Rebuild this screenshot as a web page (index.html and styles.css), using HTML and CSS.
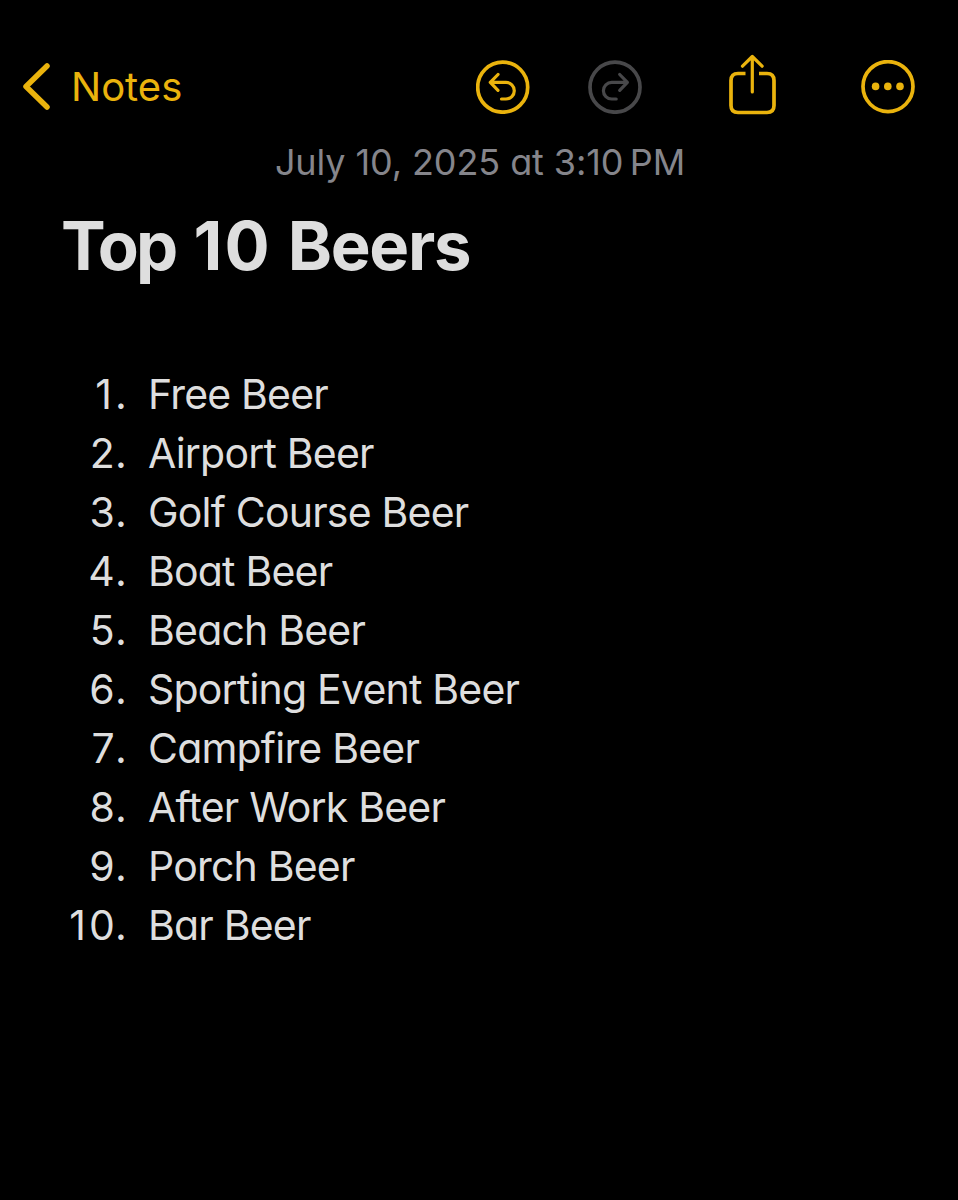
FILE: index.html
```html
<!DOCTYPE html>
<html lang="en">

<head>
    <meta charset="UTF-8">
    <meta name="viewport" content="width=device-width, initial-scale=1.0">
    <title>Top 10 Beers</title>
    <link rel="stylesheet" href="styles.css">
</head>

<body>
    <!-- Top toolbar -->
    <header class="toolbar">
        <a class="back">
            <svg class="chevron" width="28" height="48" viewBox="0 0 28 48">
                <path d="M25 3 L4 23.500 L25 44" />
            </svg>
            <span class="back-label">Notes</span>
        </a>
        <div class="actions">
            <svg class="icon undo" width="54" height="54" viewBox="0 0 54 54">
                <circle cx="26.700" cy="27.200" r="25" />
                <path class="arrow" d="M22 14.500 L14.300 22.400 L22 30.300 M15 22.400 H30 A8.300 8.300 0 0 1 30 39 H25.500" />
            </svg>
            <svg class="icon redo" width="54" height="54" viewBox="0 0 54 54">
                <circle cx="27" cy="27.200" r="25" />
                <path class="arrow" d="M31.700 14.500 L39.400 22.400 L31.700 30.300 M38.700 22.400 H23.700 A8.300 8.300 0 0 0 23.700 39 H28.200" />
            </svg>
            <svg class="icon share" width="48" height="62" viewBox="0 0 48 62">
                <path class="box" d="M17.500 19.500 H10 Q3 19.500 3 26.500 V51.500 Q3 58.500 10 58.500 H39 Q46 58.500 46 51.500 V26.500 Q46 19.500 39 19.500 H31" />
                <path class="arrow" d="M24.300 38 V3 M14.500 12.200 L24.300 2.500 L34.100 12.200" />
            </svg>
            <svg class="icon more" width="54" height="54" viewBox="0 0 54 54">
                <circle cx="27" cy="26.600" r="25" />
                <circle class="dot" cx="14.600" cy="26.400" r="3.800" />
                <circle class="dot" cx="26.800" cy="26.400" r="3.800" />
                <circle class="dot" cx="39" cy="26.400" r="3.800" />
            </svg>
        </div>
    </header>

    <!-- Note -->
    <main class="note">
        <p class="date">July 10, 2025 at 3:10&#8239;PM</p>
        <h1 class="title"><span class="top">Top</span> <span class="ten">10</span> Beers</h1>
        <ol class="list">
            <li><span class="num"><span class="one">1</span>.</span><span class="name">Free Beer</span></li>
            <li><span class="num">2.</span><span class="name">Airport Beer</span></li>
            <li><span class="num">3.</span><span class="name">Golf Course Beer</span></li>
            <li><span class="num">4.</span><span class="name">Boat Beer</span></li>
            <li><span class="num">5.</span><span class="name">Beach Beer</span></li>
            <li><span class="num">6.</span><span class="name">Sporting Event Beer</span></li>
            <li><span class="num">7.</span><span class="name">Campfire Beer</span></li>
            <li><span class="num">8.</span><span class="name">After Work Beer</span></li>
            <li><span class="num">9.</span><span class="name">Porch Beer</span></li>
            <li><span class="num"><span class="one">1</span>0.</span><span class="name">Bar Beer</span></li>
        </ol>
    </main>
</body>

</html>
```
FILE: styles.css
```css
* {
    box-sizing: border-box;
}

body {
    margin: 0;
    min-height: 1200px;
    background: #000;
    color: #dedede;
    font-family: Inter, "Open Sans", sans-serif;
    /* single-storey a */
    font-feature-settings: "cv11" 1;
}

/* Toolbar */
.toolbar {
    display: flex;
    align-items: center;
    justify-content: space-between;
    height: 142px;
    padding: 32px 43px 0 22px;
    color: #eab30d;
}

.back {
    display: flex;
    align-items: center;
    gap: 21px;
}

.back-label {
    font-size: 40px;
    line-height: 48px;
}

.chevron {
    fill: none;
    stroke: currentColor;
    stroke-width: 5.5;
    stroke-linecap: round;
    stroke-linejoin: round;
}

.actions {
    display: flex;
    align-items: center;
}

.icon {
    fill: none;
    stroke: currentColor;
    stroke-width: 3.7;
    stroke-linecap: round;
    stroke-linejoin: round;
}

.arrow {
    stroke-width: 3.2;
}

.box {
    stroke-linecap: butt;
}

.redo {
    margin-left: 58px;
    color: #48484a;
}

.share {
    margin: 0 85px 4px 86px;
}

.dot {
    fill: currentColor;
    stroke: none;
}

/* Note */
.date {
    margin: 0;
    padding-left: 2px;
    text-align: center;
    color: #85858b;
    font-size: 36px;
    line-height: 40px;
    letter-spacing: -0.1px;
}

.title {
    margin: 24px 0 0 61px;
    font-size: 67px;
    font-weight: 700;
    line-height: 80px;
    letter-spacing: -1.3px;
    word-spacing: 1.5px;
}

.top {
    letter-spacing: -2.8px;
}

.ten {
    margin-left: 2px;
    letter-spacing: 2px;
}

.list {
    margin: 79px 0 0;
    padding: 0;
    list-style: none;
}

.list li {
    display: flex;
    height: 59px;
    font-size: 41px;
    line-height: 59px;
}

.num {
    width: 127px;
    margin-right: 21px;
    text-align: right;
    font-kerning: none;
    letter-spacing: 0.2px;
}

.one {
    letter-spacing: 3px;
}

.name {
    letter-spacing: -0.8px;
}
```
